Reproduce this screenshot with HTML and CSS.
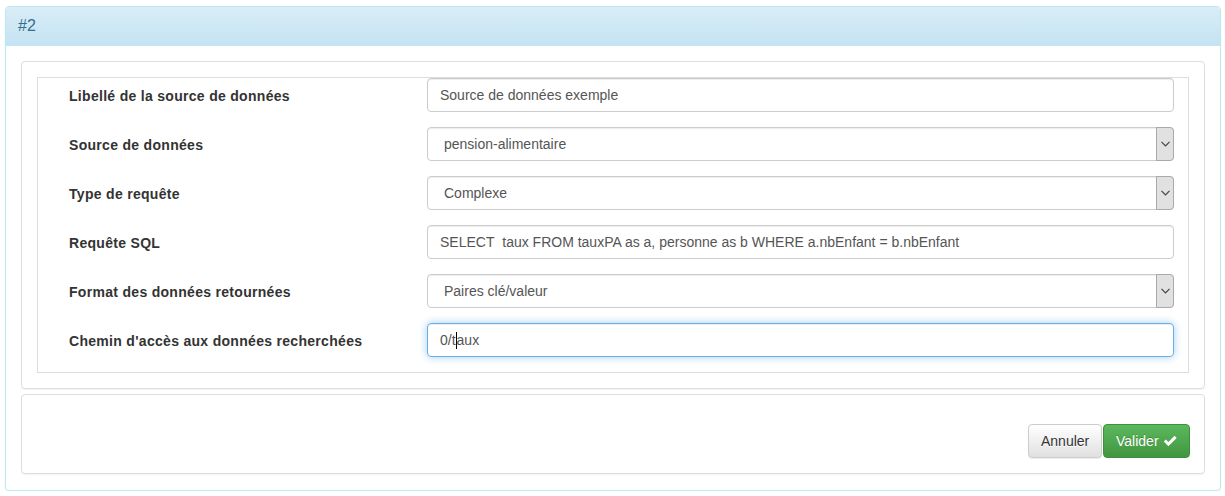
FILE: index.html
```html
<!DOCTYPE html>
<html lang="fr">
<head>
<meta charset="utf-8">
<title>#2</title>
<link rel="stylesheet" href="styles.css">
</head>
<body>
<div class="page">
  <div class="panel-info">
    <div class="panel-heading">#2</div>
    <div class="panel-body">
      <div class="panel-sub">
        <div class="form-box">
          <div class="row">
            <label class="lbl">Libellé de la source de données</label>
            <div class="ctl">Source de données exemple</div>
          </div>
          <div class="row">
            <label class="lbl">Source de données</label>
            <div class="ctl sel"><span class="sel-text">pension-alimentaire</span>
              <span class="arrow"><svg width="9" height="6" viewBox="0 0 9 6"><polyline points="0.5,0.8 4.5,4.8 8.5,0.8" fill="none" stroke="#444" stroke-width="1.2"/></svg></span>
            </div>
          </div>
          <div class="row">
            <label class="lbl">Type de requête</label>
            <div class="ctl sel"><span class="sel-text">Complexe</span>
              <span class="arrow"><svg width="9" height="6" viewBox="0 0 9 6"><polyline points="0.5,0.8 4.5,4.8 8.5,0.8" fill="none" stroke="#444" stroke-width="1.2"/></svg></span>
            </div>
          </div>
          <div class="row">
            <label class="lbl">Requête SQL</label>
            <div class="ctl">SELECT&nbsp; taux FROM tauxPA as a, personne as b WHERE a.nbEnfant = b.nbEnfant</div>
          </div>
          <div class="row">
            <label class="lbl">Format des données retournées</label>
            <div class="ctl sel"><span class="sel-text">Paires clé/valeur</span>
              <span class="arrow"><svg width="9" height="6" viewBox="0 0 9 6"><polyline points="0.5,0.8 4.5,4.8 8.5,0.8" fill="none" stroke="#444" stroke-width="1.2"/></svg></span>
            </div>
          </div>
          <div class="row">
            <label class="lbl">Chemin d'accès aux données recherchées</label>
            <div class="ctl focus">0/t<span class="caret"></span>aux</div>
          </div>
        </div>
      </div>
      <div class="panel-sub actions">
        <button class="btn btn-default">Annuler</button><button class="btn btn-success">Valider <svg class="ok" width="15" height="12" viewBox="0 0 15 12"><path d="M0.8 6.6 L3 4.4 L5.6 7 L12 0.6 L14.2 2.8 L5.6 11.4 Z" fill="#fff"/></svg></button>
      </div>
    </div>
  </div>
</div>
</body>
</html>
```

FILE: styles.css
```css
* { box-sizing: border-box; }
html, body { margin: 0; padding: 0; background: #fff; }
body {
  font-family: "Liberation Sans", Arial, sans-serif;
  font-size: 14px;
  color: #333;
}
.page { padding: 6px 4px 0 5px; }
.panel-info {
  border: 1px solid #bce8f1;
  border-radius: 4px;
  box-shadow: 0 1px 2px rgba(0,0,0,.05);
}
.panel-heading {
  background: linear-gradient(to bottom, #d9edf7 0%, #c4e3f3 100%);
  border-bottom: 1px solid #bce8f1;
  border-radius: 3px 3px 0 0;
  color: #31708f;
  font-size: 16px;
  line-height: 18px;
  padding: 10px 12px;
  height: 39px;
}
.panel-body { padding: 15px 15px 16px; }
.panel-sub {
  border: 1px solid #ddd;
  border-radius: 4px;
  padding: 15px;
  box-shadow: 0 1px 1px rgba(0,0,0,.05);
}
.panel-sub + .panel-sub { margin-top: 5px; }
.form-box {
  border: 1px solid #ddd;
  padding: 0 14px 15px 0;
  display: flex;
  flex-direction: column;
  gap: 15px;
}
.row { display: flex; align-items: center; }
.lbl {
  width: 389px;
  padding-left: 31px;
  padding-top: 2px;
  font-weight: bold;
  color: #333;
  letter-spacing: 0.3px;
}
.ctl {
  flex: 1;
  height: 34px;
  border: 1px solid #ccc;
  border-radius: 4px;
  padding: 0 12px;
  line-height: 32px;
  color: #555;
  box-shadow: inset 0 1px 1px rgba(0,0,0,.075);
  white-space: nowrap;
  display: flex;
  align-items: center;
}
.sel { padding-left: 16px; padding-right: 0; }
.sel-text { flex: 1; }
.arrow {
  width: 18px;
  height: 34px;
  margin: -1px -1px -1px 0;
  background: #e1e1e1;
  border: 1px solid #aaa;
  border-radius: 0 4px 4px 0;
  display: flex;
  align-items: center;
  justify-content: center;
}
.focus {
  border-color: #66afe9;
  box-shadow: inset 0 1px 1px rgba(0,0,0,.075), 0 0 8px rgba(102,175,233,.6);
}
.caret {
  display: inline-block;
  width: 1px;
  height: 17px;
  background: #000;
}
.actions {
  padding: 29px 14px 15px 15px;
  display: flex;
  justify-content: flex-end;
}
.btn {
  font-family: "Liberation Sans", Arial, sans-serif;
  font-size: 14px;
  height: 34px;
  padding: 0 12px;
  border-radius: 4px;
  line-height: 32px;
  cursor: pointer;
}
.btn-default {
  color: #333;
  background: linear-gradient(to bottom, #fff 0%, #e0e0e0 100%);
  border: 1px solid #ccc;
  text-shadow: 0 1px 0 #fff;
  box-shadow: inset 0 1px 0 rgba(255,255,255,.15), 0 1px 1px rgba(0,0,0,.075);
  width: 74px;
}
.btn-success {
  color: #fff;
  background: linear-gradient(to bottom, #5cb85c 0%, #419641 100%);
  border: 1px solid #3e8f3e;
  text-shadow: 0 -1px 0 rgba(0,0,0,.2);
  margin-left: 1px;
  width: 87px;
  display: flex;
  align-items: center;
  gap: 4px;
}
.ok { display: block; }
```
